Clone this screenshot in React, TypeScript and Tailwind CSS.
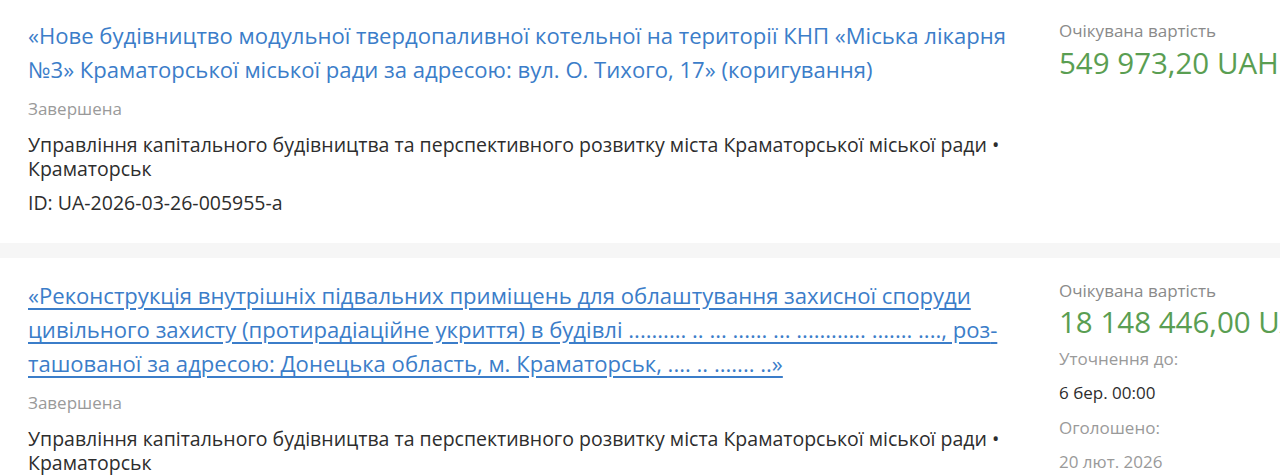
import React from "react";

const font = { fontFamily: '"Open Sans", "Noto Sans", sans-serif' };

export default function App() {
  return (
    <div className="w-[1280px] h-[476px] overflow-hidden bg-white" style={font}>
      <div className="flex pl-[28px] pt-[18px] h-[243px]">
        <div className="w-[985px] shrink-0">
          <a className="block text-[22.1px] leading-[34px] text-[#3b7dc9]">
            «Нове будівництво модульної твердопаливної котельної на території КНП «Міська лікарня №3» Краматорської міської ради за адресою: вул. О. Тихого, 17» (коригування)
          </a>
          <div className="mt-[13px] text-[17px] leading-[20px] text-[#9a9a9a]">Завершена</div>
          <div className="mt-[14px] text-[19.5px] leading-[24px] text-[#2d2d2d]">
            Управління капітального будівництва та перспективного розвитку міста Краматорської міської ради • Краматорськ
          </div>
          <div className="mt-[10px] text-[19.5px] leading-[24px] text-[#2d2d2d]">ID: UA-2026-03-26-005955-a</div>
        </div>
        <div className="ml-[46px] shrink-0 whitespace-nowrap">
          <div className="mt-[1px] text-[17px] leading-[24px] text-[#8a8a8a]">Очікувана вартість</div>
          <div className="mt-[2px] text-[29.5px] leading-[36px] text-[#5a9e52]">549 973,20 UAH</div>
        </div>
      </div>
      <div className="h-[15px] bg-[#f6f6f6]"></div>
      <div className="flex pl-[28px] pt-[20px]">
        <div className="w-[985px] shrink-0">
          <a className="block text-[22.1px] leading-[34px] text-[#3b7dc9] underline underline-offset-[4px]">
            «Реконструкція внутрішніх підвальних приміщень для облаштування захисної споруди цивільного захисту (протирадіаційне укриття) в будівлі .......... .. ... ...... ... ............ ....... ...., роз­ташованої за адресою: Донецька область, м. Краматорськ, .... .. ....... ..»
          </a>
          <div className="mt-[13px] text-[17px] leading-[20px] text-[#9a9a9a]">Завершена</div>
          <div className="mt-[14px] text-[19.5px] leading-[24px] text-[#2d2d2d]">
            Управління капітального будівництва та перспективного розвитку міста Краматорської міської ради • Краматорськ
          </div>
        </div>
        <div className="ml-[46px] shrink-0 whitespace-nowrap">
          <div className="mt-[1px] text-[17px] leading-[24px] text-[#8a8a8a]">Очікувана вартість</div>
          <div className="mt-[1px] text-[29.5px] leading-[36px] text-[#5a9e52]">18 148 446,00 UAH</div>
          <div className="mt-[8px] text-[17px] leading-[22px] text-[#9a9a9a]">Уточнення до:</div>
          <div className="mt-[12px] text-[17px] leading-[22px] text-[#2d2d2d]">6 бер. 00:00</div>
          <div className="mt-[13px] text-[17px] leading-[22px] text-[#9a9a9a]">Оголошено:</div>
          <div className="mt-[12px] text-[17px] leading-[22px] text-[#9a9a9a]">20 лют. 2026</div>
        </div>
      </div>
    </div>
  );
}
